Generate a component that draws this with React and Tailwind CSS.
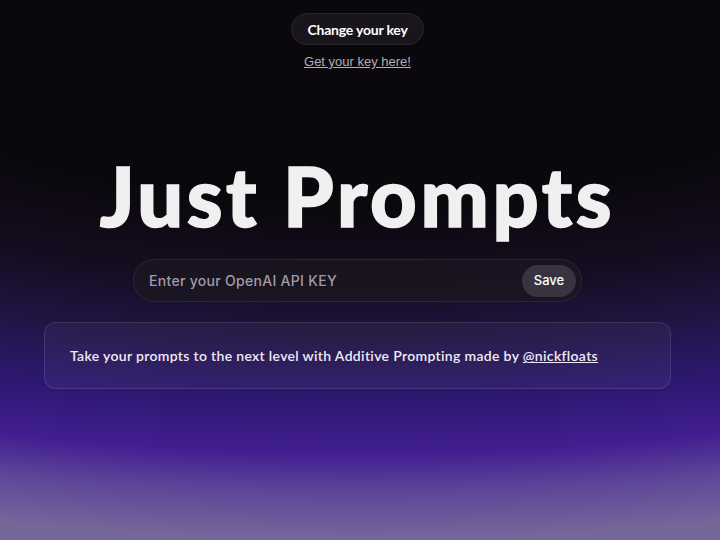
export default function App() {
  return (
    <div className="h-screen w-full overflow-hidden bg-[radial-gradient(ellipse_1470px_540px_at_50%_0%,#0b080d_38%,#140d20_52%,#1f1440_62%,#2d1870_74%,#421e91_84%,#5e4598_91%,#76679a_100%)] font-['Lato',sans-serif] text-white">
      <div className="flex flex-col items-center pt-[13px] pr-[5px]">
        <button className="h-8 px-[15px] rounded-full bg-[#19161b] border border-[#2a262d] text-[14px] font-bold tracking-[-0.2px]">
          Change your key
        </button>
        <a href="#" className="mt-[9px] text-[13px] leading-4 text-[#b3adb7] underline font-['Liberation_Sans',sans-serif]">
          Get your key here!
        </a>

        <h1 className="mt-[86px] text-[81px] leading-[80px] font-black text-[#f0f0f0] tracking-[3.6px] [-webkit-text-stroke:1.5px_#f0f0f0]">
          Just Prompts
        </h1>

        <div className="mt-[23px] w-[449px] h-[43px] rounded-full bg-[#1a1620]/80 border border-[#2c2733] flex items-center pl-[15px] pr-[5px]">
          <input
            className="flex-1 bg-transparent outline-none text-[14px] font-medium font-['Inter',sans-serif] tracking-[0.3px] placeholder:text-[#a19ba7]"
            placeholder="Enter your OpenAI API KEY"
          />
          <button className="w-[54px] h-8 rounded-full bg-[#39333f] text-[13px] font-medium font-['Inter',sans-serif]">
            Save
          </button>
        </div>

        <div className="mt-5 w-[627px] h-[67px] rounded-xl border border-white/10 bg-white/[0.04] flex items-center px-[25px]">
          <p className="text-[14px] font-semibold tracking-[0.33px] text-[#efeaf6]">
            Take your prompts to the next level with Additive Prompting made by{" "}
            <a href="#" className="underline">@nickfloats</a>
          </p>
        </div>
      </div>
    </div>
  );
}
